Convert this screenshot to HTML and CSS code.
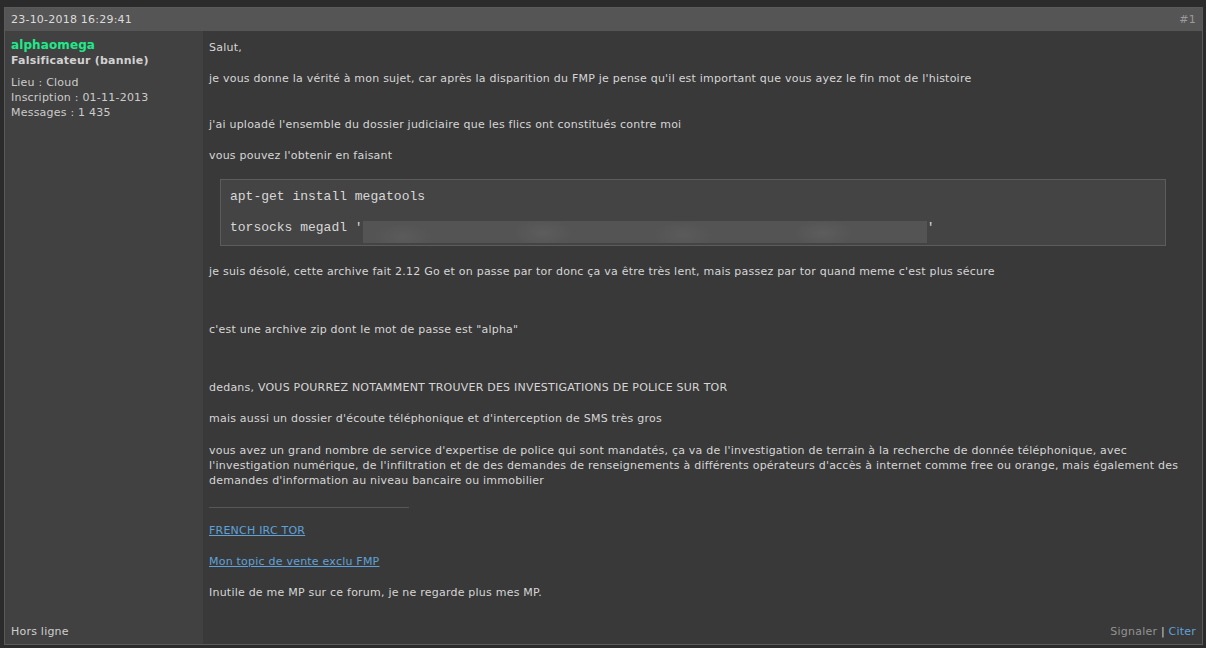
FILE: index.html
```html
<!DOCTYPE html>
<html lang="fr">
<head>
<meta charset="utf-8">
<title>Post</title>
<link rel="stylesheet" href="styles.css">
</head>
<body>
<div class="post">
  <div class="post-head">
    <span class="date">23-10-2018 16:29:41</span>
    <span class="num">#1</span>
  </div>
  <div class="author">
    <div class="name">alphaomega</div>
    <div class="title">Falsificateur (bannie)</div>
    <ul class="info">
      <li>Lieu : Cloud</li>
      <li>Inscription : 01-11-2013</li>
      <li>Messages : 1 435</li>
    </ul>
  </div>
  <div class="message">
    <p>Salut,</p>
    <p>je vous donne la vérité à mon sujet, car après la disparition du FMP je pense qu'il est important que vous ayez le fin mot de l'histoire</p>
    <p class="gap15">j'ai uploadé l'ensemble du dossier judiciaire que les flics ont constitués contre moi</p>
    <p>vous pouvez l'obtenir en faisant</p>
    <div class="code">
      <div class="code-line">apt-get install megatools</div>
      <div class="code-line">torsocks megadl '<span class="redacted"></span>'</div>
    </div>
    <p>je suis désolé, cette archive fait 2.12 Go et on passe par tor donc ça va être très lent, mais passez par tor quand meme c'est plus sécure</p>
    <p class="gap27">c'est une archive zip dont le mot de passe est "alpha"</p>
    <p class="gap27">dedans, VOUS POURREZ NOTAMMENT TROUVER DES INVESTIGATIONS DE POLICE SUR TOR</p>
    <p>mais aussi un dossier d'écoute téléphonique et d'interception de SMS très gros</p>
    <p class="gap1">vous avez un grand nombre de service d'expertise de police qui sont mandatés, ça va de l'investigation de terrain à la recherche de donnée téléphonique, avec l'investigation numérique, de l'infiltration et de des demandes de renseignements à différents opérateurs d'accès à internet comme free ou orange, mais également des demandes d'information au niveau bancaire ou immobilier</p>
    <div class="signature">
      <hr class="sig-rule">
      <p><a href="#">FRENCH IRC TOR</a></p>
      <p><a href="#">Mon topic de vente exclu FMP</a></p>
      <p class="last">Inutile de me MP sur ce forum, je ne regarde plus mes MP.</p>
    </div>
  </div>
  <div class="author-foot">Hors ligne</div>
  <div class="actions">
    <a class="report" href="#">Signaler</a> <span class="sep">|</span> <a class="quote" href="#">Citer</a>
  </div>
</div>
</body>
</html>
```

FILE: styles.css
```css
* { box-sizing: border-box; }

html, body {
  margin: 0;
  padding: 0;
  background: #2b2b2b;
}

body {
  font-family: "DejaVu Sans", Verdana, sans-serif;
  font-size: 11px;
  line-height: 15px;
  letter-spacing: 0.22px;
  color: #d6d6d6;
  padding: 7px 3px 0 4px;
}

.post {
  display: grid;
  grid-template-columns: 198px 1fr;
  grid-template-rows: auto 1fr auto;
  border: 1px solid #5a5a5a;
  background: #393939;
}

.post-head {
  grid-column: 1 / 3;
  display: flex;
  justify-content: space-between;
  background: #555555;
  padding: 4px 6px 4px 6px;
  color: #dcdcdc;
}

.num {
  color: #9a9a9a;
}

.author {
  background: #414141;
  padding: 6px 6px 0 6px;
}

.name {
  font-weight: bold;
  font-size: 12px;
  color: #20e98a;
  line-height: 16px;
  letter-spacing: 0.1px;
}

.title {
  font-weight: bold;
  color: #d2d2d2;
}

.info {
  list-style: none;
  margin: 7px 0 0 0;
  padding: 0;
  color: #cccccc;
}

.message {
  padding: 9px 6px 20px 6px;
  background: #393939;
}

.message p {
  margin: 0 0 16px 0;
}

.message p.gap15 { margin-top: 31px; }
.message p.gap27 { margin-top: 43px; }
.message p.gap1 { margin-top: 17px; }

.code {
  margin: 0 30px 18px 11px;
  padding: 9px 9px 9px 9px;
  background: #444444;
  border: 1px solid #5c5c5c;
  font-family: "Liberation Mono", "Courier New", monospace;
  font-size: 13px;
  letter-spacing: 0;
  color: #d8d8d8;
}

.code-line {
  line-height: 16px;
  height: 16px;
  white-space: pre;
}

.code-line + .code-line {
  margin-top: 15px;
}

.redacted {
  display: inline-block;
  width: 564px;
  height: 22px;
  margin: 1px 0 -7px 0;
  vertical-align: top;
  background:
    radial-gradient(ellipse 30px 14px at 40px 16px, rgba(255,255,255,0.04), transparent),
    radial-gradient(ellipse 30px 14px at 180px 12px, rgba(255,255,255,0.05), transparent),
    radial-gradient(ellipse 30px 14px at 320px 14px, rgba(255,255,255,0.04), transparent),
    radial-gradient(ellipse 30px 14px at 460px 12px, rgba(255,255,255,0.05), transparent),
    #545454;
}

.signature {
  padding-top: 3px;
}

.sig-rule {
  width: 200px;
  margin: 0 0 15px 0;
  border: 0;
  border-top: 1px solid #575757;
  height: 0;
}

.message a {
  color: #5fa2d9;
  text-decoration: underline;
}

.message p.last {
  margin-bottom: 0;
}

.author-foot {
  background: #414141;
  padding: 4px 6px 5px 6px;
  color: #cfcfcf;
}

.actions {
  background: #393939;
  padding: 4px 6px 5px 6px;
  text-align: right;
  color: #cfcfcf;
}

.actions a {
  text-decoration: none;
}

.actions .report { color: #939393; }
.actions .quote { color: #5fa2d9; }
```
